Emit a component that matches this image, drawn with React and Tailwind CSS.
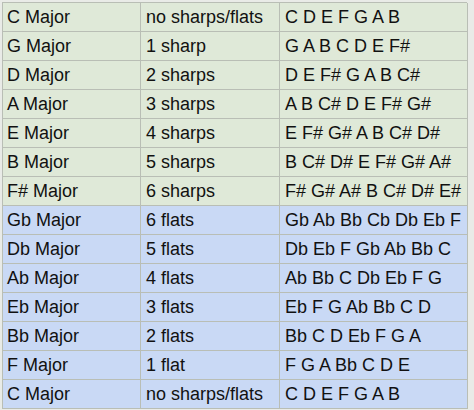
const rows = [
  ["C Major", "no sharps/flats", "C D E F G A B", "g"],
  ["G Major", "1 sharp", "G A B C D E F#", "g"],
  ["D Major", "2 sharps", "D E F# G A B C#", "g"],
  ["A Major", "3 sharps", "A B C# D E F# G#", "g"],
  ["E Major", "4 sharps", "E F# G# A B C# D#", "g"],
  ["B Major", "5 sharps", "B C# D# E F# G# A#", "g"],
  ["F# Major", "6 sharps", "F# G# A# B C# D# E#", "g"],
  ["Gb Major", "6 flats", "Gb Ab Bb Cb Db Eb F", "b"],
  ["Db Major", "5 flats", "Db Eb F Gb Ab Bb C", "b"],
  ["Ab Major", "4 flats", "Ab Bb C Db Eb F G", "b"],
  ["Eb Major", "3 flats", "Eb F G Ab Bb C D", "b"],
  ["Bb Major", "2 flats", "Bb C D Eb F G A", "b"],
  ["F Major", "1 flat", "F G A Bb C D E", "b"],
  ["C Major", "no sharps/flats", "C D E F G A B", "b"],
];

export default function App() {
  return (
    <div className="w-[474px] h-[410px] overflow-hidden bg-[#e9ebe7] pt-[2px] pl-[2px] font-['Liberation_Sans',Arial,sans-serif] text-[18px] text-[#111]">
      <div className="w-[465px] border-t border-l border-[#b9beb5]">
        {rows.map(([key, acc, notes, tone], i) => (
          <div
            key={i}
            className={`grid grid-cols-[138px_139px_188px] h-[29px] ${
              tone === "g" ? "bg-[#dfe9d8]" : "bg-[#c9d9f5]"
            }`}
          >
            <div className="border-r border-b border-[#b9beb5] pl-[4px] flex items-center whitespace-nowrap">
              {key}
            </div>
            <div className="border-r border-b border-[#b9beb5] pl-[5px] flex items-center whitespace-nowrap">
              {acc}
            </div>
            <div className="border-r border-b border-[#b9beb5] pl-[5px] flex items-center whitespace-nowrap">
              {notes}
            </div>
          </div>
        ))}
      </div>
    </div>
  );
}
